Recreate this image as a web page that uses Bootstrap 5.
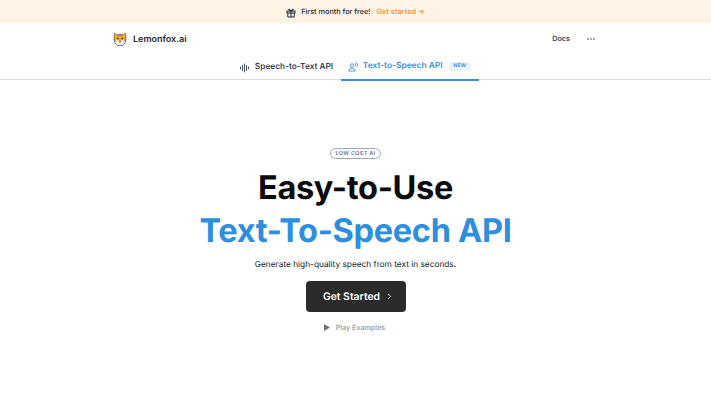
<!DOCTYPE html>
<html lang="en"><head><meta charset="utf-8">
<title>Lemonfox.ai</title>
<link href="https://cdn.jsdelivr.net/npm/bootstrap@5.3.0/dist/css/bootstrap.min.css" rel="stylesheet">
<style>
html,body{height:400px;overflow:hidden;}
body{font-family:Inter,"Liberation Sans",sans-serif;color:#111827;background:#fff;text-rendering:geometricPrecision;}
.promo{height:23px;padding-top:2px;background:#fff3e6;font-size:7.3px;font-weight:500;color:#1f2937;gap:5px;}
.promo a{color:#f0983a;font-weight:600;text-decoration:none;margin-left:1px;}
.topbar{height:32px;padding:0 112px 0 113px;}
.brand-name{font-size:9px;font-weight:600;color:#1f2937;margin:1px 0 0 6px;}
.docs{font-size:7.2px;font-weight:600;color:#374151;text-decoration:none;margin:1px 17px 0 0;}
.tabs{height:25px;border-bottom:1px solid #d9dde3;}
.tabitem{height:25px;font-size:8.4px;font-weight:500;color:#1f2937;text-decoration:none;gap:5px;box-sizing:border-box;white-space:nowrap;}
.tab-a{width:104px;margin-right:4px;justify-content:center;padding-left:4px;}
.tab-b{width:138px;color:#3b8fd4;border-bottom:2px solid #3b8fd4;margin-bottom:-1px;height:26px;padding-bottom:1px;justify-content:center;font-weight:600;}
.newtag{font-size:5px;font-weight:700;background:#e8f3fb;color:#3b8fd4;padding:1px 5px;border-radius:2px;letter-spacing:.2px;margin-left:1px;}
.hero{padding-top:68px;}
.pill{font-size:5.5px;font-weight:600;color:#6b7280;border:1px solid #a3a9b2;border-radius:99px;padding:1px 5px;height:11px;line-height:8px;letter-spacing:.3px;}
.headline{font-size:32.5px;font-weight:700;line-height:43px;letter-spacing:-.3px;margin:0;color:#0b0b0b;}
.head-one{margin-top:7px;}
.head-two{color:#2f8fdd;}
.sub{font-size:8.3px;font-weight:400;color:#111827;margin:7px 0 0;line-height:13px;}
.cta{width:100px;height:31px;margin-top:9px;background:#2b2b2b;color:#fff;border:0;border-radius:4px;font-size:10.4px;font-weight:600;gap:6px;}
.cta:hover{background:#2b2b2b;color:#fff;}
.cta span{padding-left:4px;}
.play{font-size:7.1px;font-weight:600;color:#9ca3af;margin-top:10px;gap:6px;line-height:11px;margin-left:-2px;}
</style></head>
<body>
<div class="promo d-flex align-items-center justify-content-center">
<svg width="10" height="10" viewBox="0 0 10 10" fill="none" stroke="#1f2937" stroke-width="1"><rect x="1" y="3" width="8" height="2"/><path d="M1.8 5v4h6.4V5M5 3v6M5 3C3.5 3 2.6 2.4 2.6 1.6S3.6.5 5 3c1.4-2.5 2.4-2.2 2.4-1.4S6.500 3 5 3z"/></svg>
<span>First month for free!</span>
<a href="#">Get started →</a>
</div>
<div class="topbar d-flex align-items-center">
<svg width="14" height="14" viewBox="0 0 14 14"><circle cx="7" cy="8" r="5.800" fill="#fff" stroke="#555" stroke-width=".8"/><path d="M1.500 1l3 2.500h5L12.500 1l.5 6.500L7 12 1 7.500z" fill="#f3a72e" stroke="#4a3a20" stroke-width=".5"/><path d="M3 7.500c1 0 2.500.8 4 3 1.500-2.200 3-3 4-3 0 2.500-2 4.500-4 4.500S3 10 3 7.500z" fill="#fff"/><circle cx="4.800" cy="6.600" r=".8" fill="#222"/><circle cx="9.200" cy="6.600" r=".8" fill="#222"/><circle cx="7" cy="10" r=".7" fill="#222"/></svg>
<span class="brand-name">Lemonfox.ai</span>
<a class="docs ms-auto" href="#">Docs</a>
<svg width="8" height="8" viewBox="0 0 8 8" fill="#374151" class="me-1"><circle cx="1" cy="4" r=".8"/><circle cx="4" cy="4" r=".8"/><circle cx="7" cy="4" r=".8"/></svg>
</div>
<div class="tabs d-flex justify-content-center">
<a class="tabitem tab-a d-flex align-items-center" href="#">
<svg width="10" height="10" viewBox="0 0 10 10" stroke="#374151" stroke-width=".9" stroke-linecap="round"><path d="M.5 4v2M2.500 2.500v5M4.500 1v8M6.500 2.500v5M8.500 4v2"/></svg>
Speech-to-Text API</a>
<a class="tabitem tab-b d-flex align-items-center" href="#">
<svg width="10" height="10" viewBox="0 0 10 10" fill="none" stroke="#3b8fd4" stroke-width=".9"><circle cx="4" cy="3.500" r="1.700"/><path d="M.8 9c0-2 1.400-3 3.200-3s3.200 1 3.200 3zM7 1c.8.600 1 2.300.2 3M8.500.500c1.200 1 1.300 3.200.2 4.200"/></svg>
Text-to-Speech API <span class="newtag">NEW</span></a>
</div>
<main class="hero d-flex flex-column align-items-center text-center">
<span class="pill">LOW COST AI</span>
<h1 class="headline head-one">Easy-to-Use</h1>
<h1 class="headline head-two">Text-To-Speech API</h1>
<p class="sub">Generate high-quality speech from text in seconds.</p>
<a href="#" class="btn cta d-flex align-items-center justify-content-center p-0"><span>Get Started</span>
<svg width="6" height="7" viewBox="0 0 6 7" fill="none" stroke="#fff" stroke-width="1"><path d="M2 1l2.500 2.500L2 6"/></svg></a>
<div class="play d-flex align-items-center">
<svg width="6" height="7" viewBox="0 0 6 7" fill="#6b7280"><path d="M0 0l6 3.500L0 7z"/></svg>
<span>Play Examples</span></div>
</main>
</body></html>
